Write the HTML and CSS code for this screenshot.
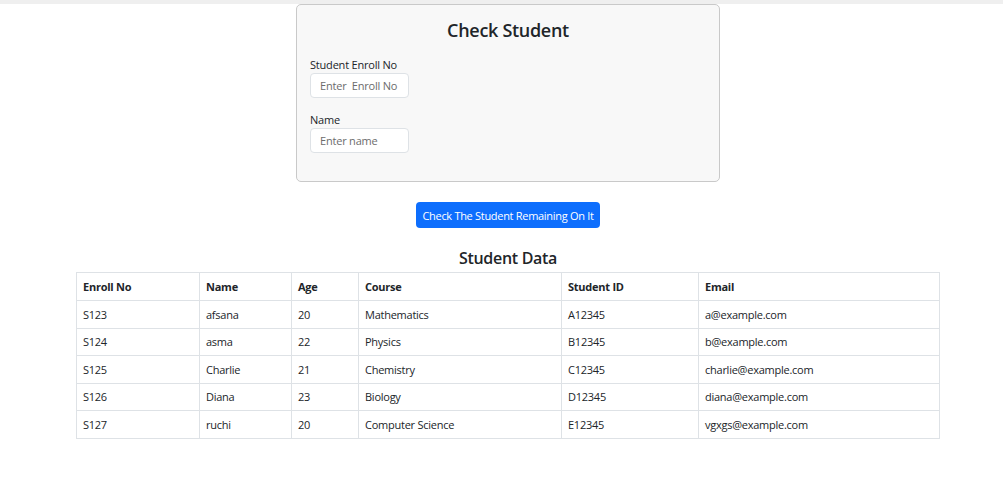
FILE: index.html
```html
<!DOCTYPE html>
<html>
<head>
<meta charset="utf-8">
<link rel="stylesheet" href="styles.css">
</head>
<body>
<div class="topbar"></div>
<div class="page">
  <form class="card">
    <h2 class="card-title">Check Student</h2>
    <div class="field">
      <label>Student Enroll No</label>
      <input type="text" placeholder="Enter  Enroll No">
    </div>
    <div class="field">
      <label>Name</label>
      <input type="text" placeholder="Enter name">
    </div>
  </form>
  <button class="btn" type="button">Check The Student Remaining On It</button>
  <h3 class="section-title">Student Data</h3>
  <table class="data">
    <colgroup>
      <col style="width:123px"><col style="width:92px"><col style="width:67px"><col style="width:203px"><col style="width:137px"><col>
    </colgroup>
    <thead>
      <tr><th>Enroll No</th><th>Name</th><th>Age</th><th>Course</th><th>Student ID</th><th>Email</th></tr>
    </thead>
    <tbody>
      <tr><td>S123</td><td>afsana</td><td>20</td><td>Mathematics</td><td>A12345</td><td>a@example.com</td></tr>
      <tr><td>S124</td><td>asma</td><td>22</td><td>Physics</td><td>B12345</td><td>b@example.com</td></tr>
      <tr><td>S125</td><td>Charlie</td><td>21</td><td>Chemistry</td><td>C12345</td><td>charlie@example.com</td></tr>
      <tr><td>S126</td><td>Diana</td><td>23</td><td>Biology</td><td>D12345</td><td>diana@example.com</td></tr>
      <tr><td>S127</td><td>ruchi</td><td>20</td><td>Computer Science</td><td>E12345</td><td>vgxgs@example.com</td></tr>
    </tbody>
  </table>
</div>
</body>
</html>
```
FILE: styles.css
```css
* { box-sizing: border-box; }
html, body { margin: 0; padding: 0; background: #fff; }
body {
  font-family: "Open Sans", "Noto Sans", sans-serif;
  color: #212529;
  font-size: 11px;
}
.topbar { height: 4px; background: #efefef; }
.page {
  display: flex;
  flex-direction: column;
  align-items: center;
}
.card {
  width: 424px;
  height: 178px;
  margin: 0 0 0 13px;
  background: #f8f8f8;
  border: 1px solid #c9c9c9;
  border-radius: 5px;
  padding: 12px 13px 0 13px;
  display: flex;
  flex-direction: column;
}
.card-title {
  margin: 0 0 15px 0;
  text-align: center;
  font-size: 18px;
  font-weight: 600;
  line-height: 26px;
  letter-spacing: -0.3px;
}
.field { display: flex; flex-direction: column; margin-bottom: 15px; }
.field label {
  font-size: 11px;
  line-height: 14px;
  margin-bottom: 1px;
  letter-spacing: -0.2px;
}
.field input {
  width: 99px;
  height: 25px;
  border: 1px solid #dee2e6;
  border-radius: 4px;
  background: #fff;
  padding: 0 9px;
  font-family: inherit;
  font-size: 11px;
  letter-spacing: -0.2px;
}
.field input::placeholder { color: #6c6c6c; }
.btn {
  margin-top: 20px;
  margin-left: 13px;
  height: 26px;
  width: 184px;
  padding: 0;
  background: #0d6efd;
  color: #fff;
  border: none;
  border-radius: 4px;
  font-family: inherit;
  font-size: 11px;
  letter-spacing: -0.3px;
}
.section-title {
  margin: 19px 0 3px 13px;
  font-size: 16px;
  font-weight: 600;
  line-height: 22px;
  letter-spacing: -0.3px;
}
.data {
  width: 864px;
  margin-left: 13px;
  border-collapse: collapse;
  table-layout: fixed;
}
.data th, .data td {
  border: 1px solid #dee2e6;
  padding: 0 6px;
  height: 28px;
  text-align: left;
  font-size: 11px;
  letter-spacing: -0.25px;
}
.data td { height: 27.5px; }
.data th { font-weight: 700; }
```
